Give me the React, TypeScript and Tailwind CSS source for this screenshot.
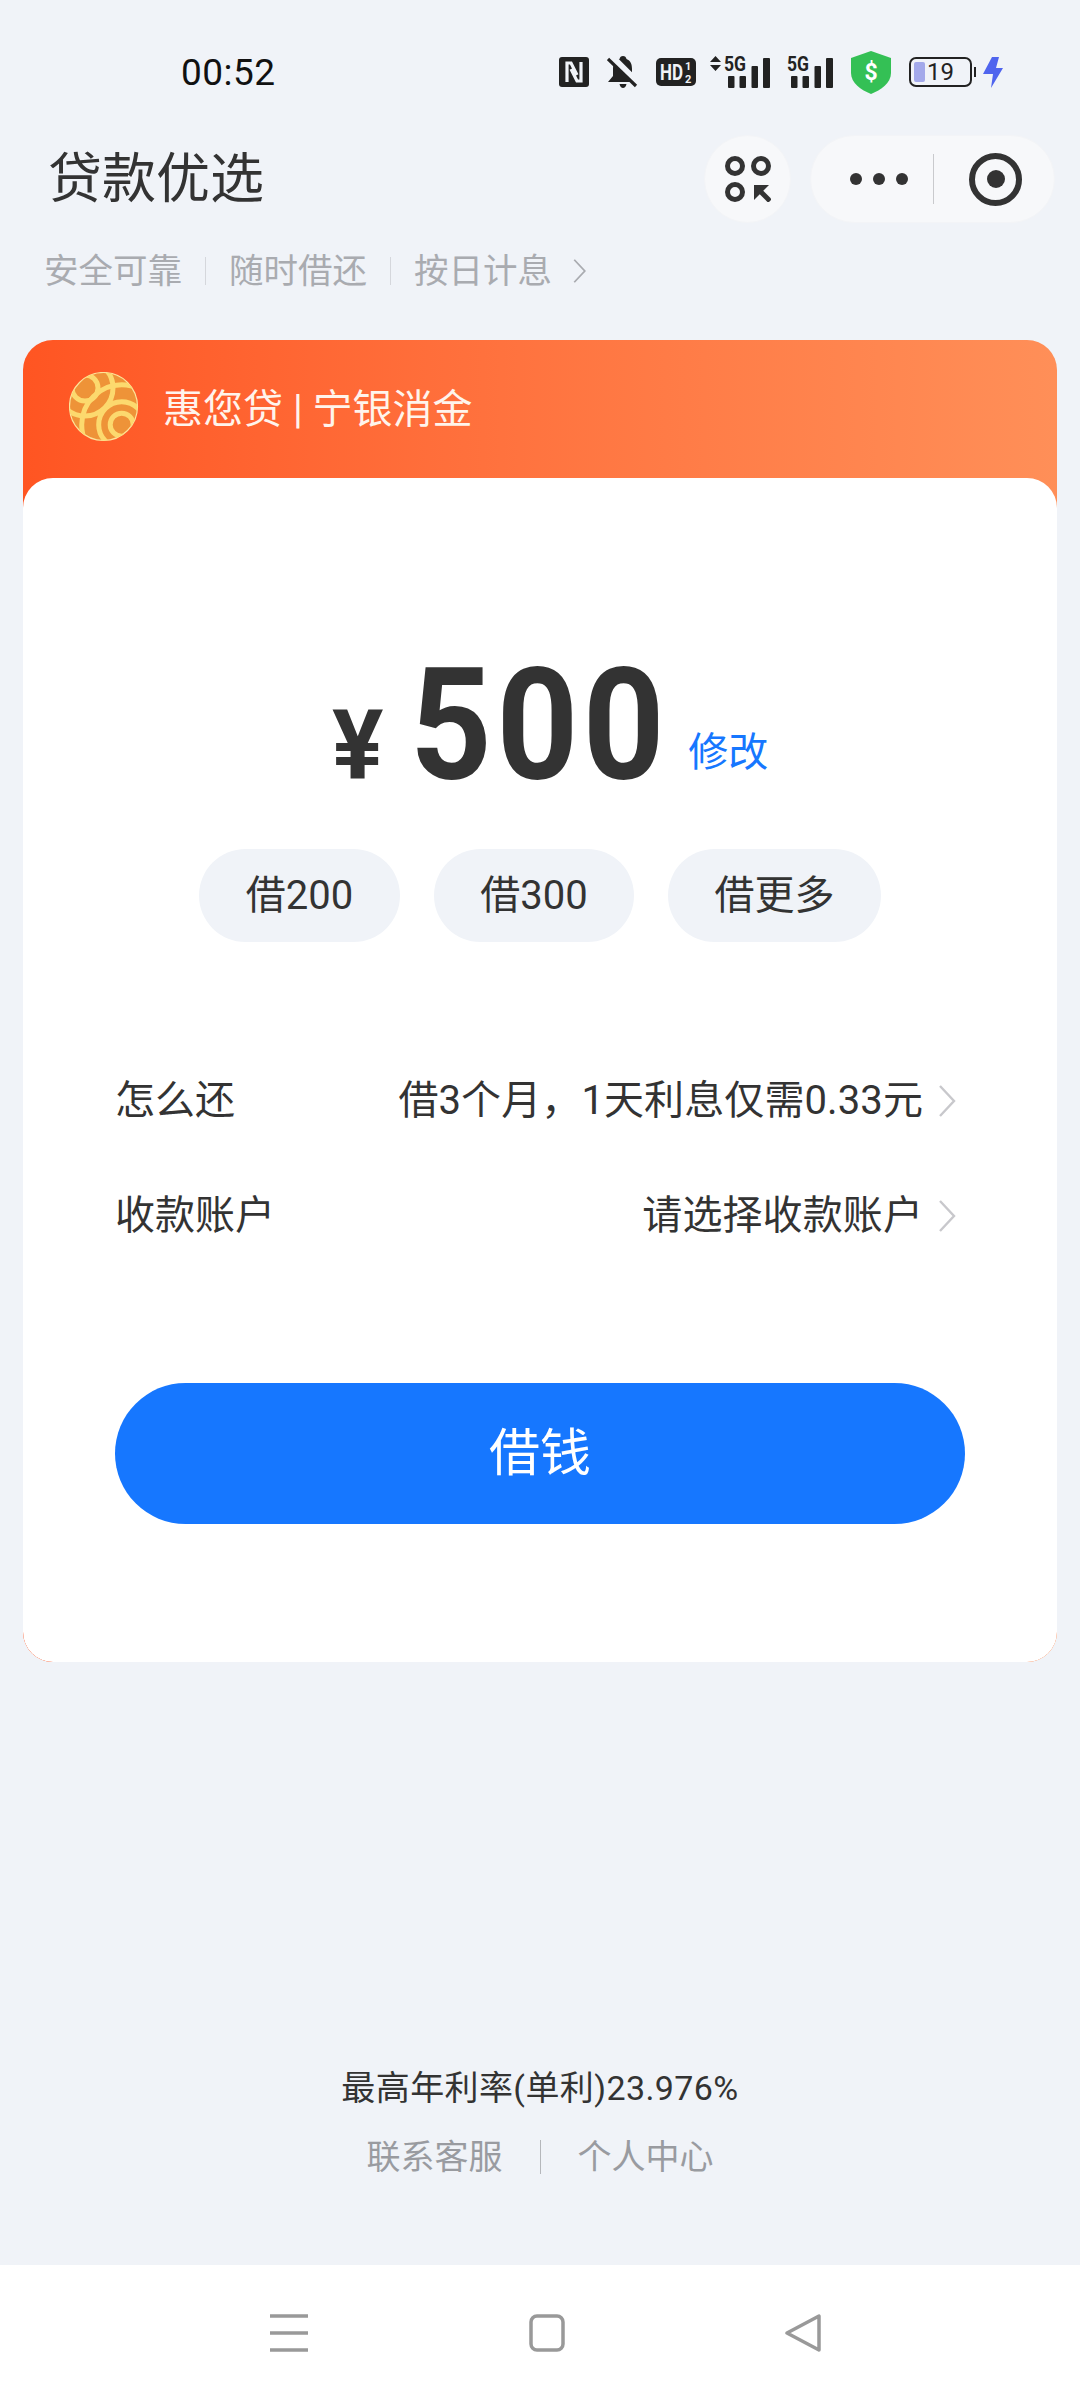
const cjk = "font-['Roboto','Noto_Sans_CJK_SC',sans-serif]"

function Chevron({ className }: { className: string }) {
  return (
    <svg className={className} viewBox="0 0 20 34" fill="none">
      <path d="M3 2 L17 17 L3 32" stroke="currentColor" strokeWidth="2.4" />
    </svg>
  )
}

function Signal({ arrows, width }: { arrows?: boolean; width: number }) {
  const x = arrows ? 14 : 0
  return (
    <svg className="overflow-visible" width={width} height="32" viewBox={`0 0 ${width} 32`}>
      {arrows && <path d="M5.5 0 L11 6 H0 Z M5.5 15 L11 9 H0 Z" fill="#222" />}
      <text x={x} y="15" fontSize="20" fontWeight="700" fontFamily="Roboto" textLength="22" lengthAdjust="spacingAndGlyphs" fill="#222">5G</text>
      <rect x={x + 4} y="20" width="6.5" height="12" rx="1" fill="#222" />
      <rect x={x + 15.5} y="20" width="6.5" height="12" rx="1" fill="#222" />
      <rect x={x + 27.5} y="10" width="6.5" height="22" rx="1" fill="#222" />
      <rect x={x + 39} y="2" width="7" height="30" rx="1" fill="#222" />
    </svg>
  )
}

function StatusIcons() {
  return (
    <div className="flex items-center">
      {/* NFC */}
      <svg width="30" height="30" viewBox="0 0 30 30">
        <rect width="30" height="30" rx="3" fill="#222" />
        <path d="M8 25 V6 L12 6 L18 18 M22 5 V24 L18 24 L12 12" fill="none" stroke="#f0f3f8" strokeWidth="3.2" />
      </svg>
      {/* muted bell */}
      <svg className="ml-[18px]" width="31" height="32" viewBox="0 0 31 32">
        <path d="M16 0 C18 0 19 1 19.5 3 C23.5 4.5 25 8 25 13 V20 L30 26 H1 L6 20 V13 C6 8 8 4.5 12.5 3 C13 1 14 0 16 0 Z" fill="#222" />
        <path d="M12.5 28 H19.5 C19 30.5 17.5 32 16 32 C14.5 32 13 30.5 12.5 28 Z" fill="#222" />
        <path d="M3 0 L31 28" stroke="#f0f3f8" strokeWidth="8" />
        <path d="M1 3 L29 30" stroke="#222" strokeWidth="3.2" />
      </svg>
      {/* HD */}
      <svg className="ml-[18px] overflow-visible" width="40" height="28" viewBox="0 0 40 28">
        <rect width="40" height="28" rx="5" fill="#222" />
        <text x="4" y="22" fontSize="22" fontWeight="700" fontFamily="Roboto" textLength="23" lengthAdjust="spacingAndGlyphs" fill="#f0f3f8">HD</text>
        <text x="29" y="12" fontSize="11" fontWeight="700" fontFamily="Roboto" fill="#f0f3f8">1</text>
        <text x="29" y="25" fontSize="11" fontWeight="700" fontFamily="Roboto" fill="#f0f3f8">2</text>
      </svg>
      <div className="ml-[14px]">
        <Signal arrows width={60} />
      </div>
      <div className="ml-[17px]">
        <Signal width={46} />
      </div>
      {/* shield */}
      <svg className="ml-[18px]" width="40" height="43" viewBox="0 0 40 43">
        <path d="M20 0 L40 7 V22 C40 32 30 39 20 43 C10 39 0 32 0 22 V7 Z" fill="#34c055" />
        <text x="20" y="29" textAnchor="middle" fontSize="23" fontWeight="700" fontFamily="Roboto" fill="#fff">$</text>
      </svg>
      {/* battery */}
      <div className="ml-[18px] flex items-center">
        <div className={`flex h-[30px] w-[63px] items-center rounded-[7px] border-2 border-[#222] p-[3px] text-[24px] leading-none text-[#222] ${cjk}`}>
          <span className="h-full w-[11px] rounded-[2px] bg-[#a3a9ea]" />
          <span className="ml-[2px]">19</span>
        </div>
        <span className="ml-[2px] h-[10px] w-[2px] bg-[#222]" />
      </div>
      {/* charging bolt */}
      <svg className="ml-[7px]" width="20" height="31" viewBox="0 0 20 31">
        <path d="M9 0 H16 L13 11 H20 L8 31 L10 17 H0 Z" fill="#4f64ee" />
      </svg>
    </div>
  )
}

function Logo() {
  return (
    <svg className="-mt-[5px]" width="70" height="70" viewBox="0 0 70 70">
      <defs>
        <clipPath id="ball">
          <circle cx="34.5" cy="34.5" r="34" />
        </clipPath>
      </defs>
      <circle cx="34.5" cy="34.5" r="34" fill="#ee9338" stroke="#fde49a" strokeWidth="1.2" />
      <g clipPath="url(#ball)" fill="none" stroke="#fcd96e" strokeWidth="5">
        <circle cx="52.7" cy="52.7" r="11.5" />
        <circle cx="52.7" cy="52.7" r="23" />
        <circle cx="52.7" cy="52.7" r="40" />
        <circle cx="16" cy="16" r="13" />
        <circle cx="16" cy="16" r="28" />
      </g>
    </svg>
  )
}

function InfoRow({ label, value }: { label: string; value: string }) {
  return (
    <div className="flex h-[60px] items-center justify-between pl-[92px] pr-[100px]">
      <span>{label}</span>
      <span className="flex items-center">
        <span className="tracking-[0.1px]">{value}</span>
        <Chevron className="ml-[14px] h-[34px] w-[20px] text-[#c8c8cc]" />
      </span>
    </div>
  )
}

export default function App() {
  return (
    <div className={`flex h-[2400px] w-[1080px] flex-col overflow-hidden bg-[#f0f3f8] text-[#333] ${cjk}`}>
      {/* Status bar */}
      <div className="flex h-[135px] items-center justify-between pt-[9px] pl-[181px] pr-[77px]">
        <span className="text-[37px] leading-none tracking-[0.5px] text-[#111]">00:52</span>
        <StatusIcons />
      </div>

      {/* Mini program title bar */}
      <div className="flex h-[88px] items-center justify-between pl-[48px] pr-[25px]">
        <h1 className="mt-[2px] text-[54px] font-normal leading-none">贷款优选</h1>
        <div className="flex items-center gap-[19px]">
          <div className="flex h-[88px] w-[87px] items-center justify-center rounded-full border border-[#f3f4f7] bg-[#f7f8fa]">
            <svg width="46" height="46" viewBox="0 0 46 46" fill="none" stroke="#333" strokeWidth="5">
              <circle cx="10" cy="10" r="7.5" />
              <circle cx="36" cy="10" r="7.5" />
              <circle cx="10" cy="36" r="7.5" />
              <path d="M29 44 V29 H44 Z" fill="#333" stroke="none" />
              <path d="M33 33 L45 45" />
            </svg>
          </div>
          <div className="flex h-[88px] w-[245px] items-center rounded-full border border-[#f3f4f7] bg-[#f7f8fa]">
            <div className="ml-[39px] flex gap-[11px]">
              <span className="h-[12px] w-[12px] rounded-full bg-[#333]" />
              <span className="h-[12px] w-[12px] rounded-full bg-[#333]" />
              <span className="h-[12px] w-[12px] rounded-full bg-[#333]" />
            </div>
            <span className="ml-[25px] h-[50px] w-px bg-[#c9cacd]" />
            <span className="ml-[35px] flex h-[53px] w-[53px] items-center justify-center rounded-full border-[6px] border-[#333]">
              <span className="h-[18px] w-[18px] rounded-full bg-[#333]" />
            </span>
          </div>
        </div>
      </div>

      {/* Tagline */}
      <div className="mt-[28px] flex h-[40px] items-center pl-[44px] text-[34.5px] leading-none text-[#a9abb0]">
        <span>安全可靠</span>
        <span className="mx-[23px] h-[28px] w-px bg-[#d5d7dc]" />
        <span>随时借还</span>
        <span className="mx-[23px] h-[28px] w-px bg-[#d5d7dc]" />
        <span>按日计息</span>
        <Chevron className="ml-[20px] h-[26px] w-[15px] text-[#a9abb0]" />
      </div>

      {/* Loan card */}
      <div className="mx-[23px] mt-[49px] h-[1322px] overflow-hidden rounded-[30px] bg-gradient-to-r from-[#ff5522] to-[#ff8f58]">
        <div className="flex h-[138px] items-center pl-[46px]">
          <Logo />
          <span className="ml-[24px] mt-[2px] text-[40px] leading-none text-[#fff4ec]">惠您贷 | 宁银消金</span>
        </div>
        <div className="h-[1184px] rounded-[30px] bg-white text-[40px] leading-none">
          <div className="flex h-[333px] items-baseline pl-[309px] pt-[161px]">
            <span className="text-[96px] font-bold leading-[172px] text-[#333]">¥</span>
            <span className="ml-[27px] inline-block origin-left scale-x-[0.92] text-[155px] font-bold leading-[172px] tracking-[5px] text-[#333]">500</span>
            <span className="-ml-[4px] -translate-y-[12px] text-[#1677ff]">修改</span>
          </div>
          <div className="mt-[38px] flex justify-center gap-[34px]">
            <span className="flex h-[93px] w-[201px] items-center justify-center rounded-full bg-[#f0f3f8]">借200</span>
            <span className="flex h-[93px] w-[200px] items-center justify-center rounded-full bg-[#f0f3f8]">借300</span>
            <span className="flex h-[93px] w-[213px] items-center justify-center rounded-full bg-[#f0f3f8]">借更多</span>
          </div>
          <div className="mt-[129px] flex flex-col gap-[55px]">
            <InfoRow label="怎么还" value="借3个月，1天利息仅需0.33元" />
            <InfoRow label="收款账户" value="请选择收款账户" />
          </div>
          <div className="mx-[92px] mt-[137px] flex h-[141px] items-center justify-center rounded-full bg-[#1677ff] text-[51px] text-white">
            借钱
          </div>
        </div>
      </div>

      {/* Footer */}
      <div className="mt-[405px] flex flex-col items-center">
        <span className="text-[34px] leading-[42px] tracking-[0.4px]">最高年利率(单利)23.976%</span>
        <div className="mt-[27px] flex items-center text-[34px] leading-[42px] text-[#999ba0]">
          <span>联系客服</span>
          <span className="mx-[37px] h-[34px] w-px bg-[#b5b7bb]" />
          <span>个人中心</span>
        </div>
      </div>

      {/* Navigation bar */}
      <div className="mt-[87px] flex h-[133px] flex-1 items-center justify-between bg-white pl-[270px] pr-[259px]">
        <svg width="38" height="38" viewBox="0 0 38 38" stroke="#999" strokeWidth="3.5">
          <path d="M0 2 H38 M0 19 H38 M0 36 H38" />
        </svg>
        <svg width="36" height="38" viewBox="0 0 36 38" fill="none" stroke="#999" strokeWidth="3.5">
          <rect x="2" y="2" width="32" height="34" rx="6" />
        </svg>
        <svg width="36" height="38" viewBox="0 0 36 38" fill="none" stroke="#999" strokeWidth="3.5" strokeLinejoin="round">
          <path d="M34 2 V36 L2 19 Z" />
        </svg>
      </div>
    </div>
  )
}
